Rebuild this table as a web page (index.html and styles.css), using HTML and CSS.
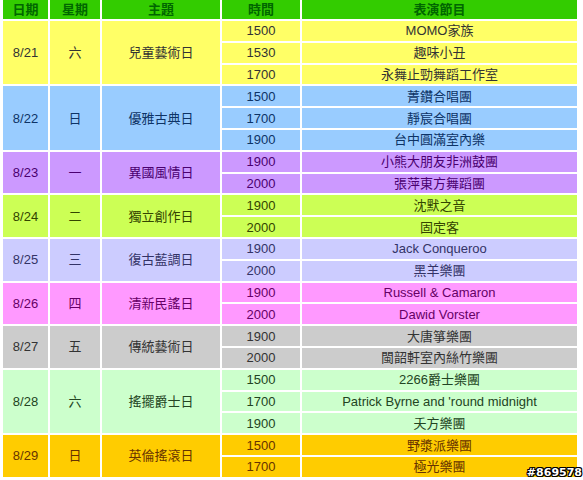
FILE: index.html
```html
<!DOCTYPE html>
<html>
<head>
<meta charset="utf-8">
<link rel="stylesheet" href="styles.css">
</head>
<body>
<table class="sched">
<colgroup><col class="c1"><col class="c2"><col class="c3"><col class="c4"><col class="c5"></colgroup>
<tr class="head"><th>日期</th><th>星期</th><th>主題</th><th>時間</th><th>表演節目</th></tr>
<tr class="g1"><td rowspan="3">8/21</td><td rowspan="3">六</td><td rowspan="3">兒童藝術日</td><td>1500</td><td>MOMO家族</td></tr>
<tr class="g1"><td>1530</td><td>趣味小丑</td></tr>
<tr class="g1"><td>1700</td><td>永舞止勁舞蹈工作室</td></tr>
<tr class="g2"><td rowspan="3">8/22</td><td rowspan="3">日</td><td rowspan="3">優雅古典日</td><td>1500</td><td>菁鑽合唱團</td></tr>
<tr class="g2"><td>1700</td><td>靜宸合唱團</td></tr>
<tr class="g2"><td>1900</td><td>台中圓滿室內樂</td></tr>
<tr class="g3"><td rowspan="2">8/23</td><td rowspan="2">一</td><td rowspan="2">異國風情日</td><td>1900</td><td>小熊大朋友非洲鼓團</td></tr>
<tr class="g3"><td>2000</td><td>張萍東方舞蹈團</td></tr>
<tr class="g4"><td rowspan="2">8/24</td><td rowspan="2">二</td><td rowspan="2">獨立創作日</td><td>1900</td><td>沈默之音</td></tr>
<tr class="g4"><td>2000</td><td>固定客</td></tr>
<tr class="g5"><td rowspan="2">8/25</td><td rowspan="2">三</td><td rowspan="2">復古藍調日</td><td>1900</td><td>Jack Conqueroo</td></tr>
<tr class="g5"><td>2000</td><td>黑羊樂團</td></tr>
<tr class="g6"><td rowspan="2">8/26</td><td rowspan="2">四</td><td rowspan="2">清新民謠日</td><td>1900</td><td>Russell &amp; Camaron</td></tr>
<tr class="g6"><td>2000</td><td>Dawid Vorster</td></tr>
<tr class="g7"><td rowspan="2">8/27</td><td rowspan="2">五</td><td rowspan="2">傳統藝術日</td><td>1900</td><td>大唐箏樂團</td></tr>
<tr class="g7"><td>2000</td><td>閩韶軒室內絲竹樂團</td></tr>
<tr class="g8"><td rowspan="3">8/28</td><td rowspan="3">六</td><td rowspan="3">搖擺爵士日</td><td>1500</td><td>2266爵士樂團</td></tr>
<tr class="g8"><td>1700</td><td>Patrick Byrne and 'round midnight</td></tr>
<tr class="g8"><td>1900</td><td>夭方樂團</td></tr>
<tr class="g9"><td rowspan="2">8/29</td><td rowspan="2">日</td><td rowspan="2">英倫搖滾日</td><td>1500</td><td>野漿派樂團</td></tr>
<tr class="g9"><td>1700</td><td>極光樂團</td></tr>
</table>
<div class="mark">#869578</div>
</body>
</html>
```

FILE: styles.css
```css
html, body {
  margin: 0;
  padding: 0;
  background: #ffffff;
}
body {
  width: 583px;
  height: 480px;
  overflow: hidden;
  position: relative;
  font-family: "Liberation Sans", "Noto Sans CJK TC", sans-serif;
  font-size: 13px;
}
.sched {
  table-layout: fixed;
  border-collapse: separate;
  border-spacing: 2px;
  width: 578px;
  margin: -2px 0 0 1px;
}
.c1 { width: 45px; }
.c2 { width: 50px; }
.c3 { width: 118px; }
.c4 { width: 78px; }
.c5 { width: 275px; }
.sched th, .sched td {
  padding: 0;
  text-align: center;
  vertical-align: middle;
  line-height: 15px;
  font-weight: normal;
}
.head th {
  height: 19px;
  background: #33cc00;
  color: #006600;
  font-weight: bold;
}
.sched td { height: 19.8px; }
.g1 td { background: #ffff66; color: #333333; }
.g2 td { background: #99ccff; color: #0d3366; }
.g3 td { background: #cc99ff; color: #4a0070; }
.g4 td { background: #ccff55; color: #334400; }
.g5 td { background: #ccccff; color: #333366; }
.g6 td { background: #ff99ff; color: #660066; }
.g7 td { background: #cccccc; color: #333333; }
.g8 td { background: #ccffcc; color: #224422; }
.g9 td { background: #ffcc00; color: #663300; }
.mark {
  position: absolute;
  right: 1px;
  bottom: 2px;
  font-family: "DejaVu Sans", sans-serif;
  font-weight: bold;
  font-size: 11px;
  line-height: 11px;
  color: #ffffff;
  text-shadow: 1px 0 0 #000, -1px 0 0 #000, 0 1px 0 #000, 0 -1px 0 #000, 1px 1px 0 #000, -1px -1px 0 #000, 1px -1px 0 #000, -1px 1px 0 #000;
}
```
